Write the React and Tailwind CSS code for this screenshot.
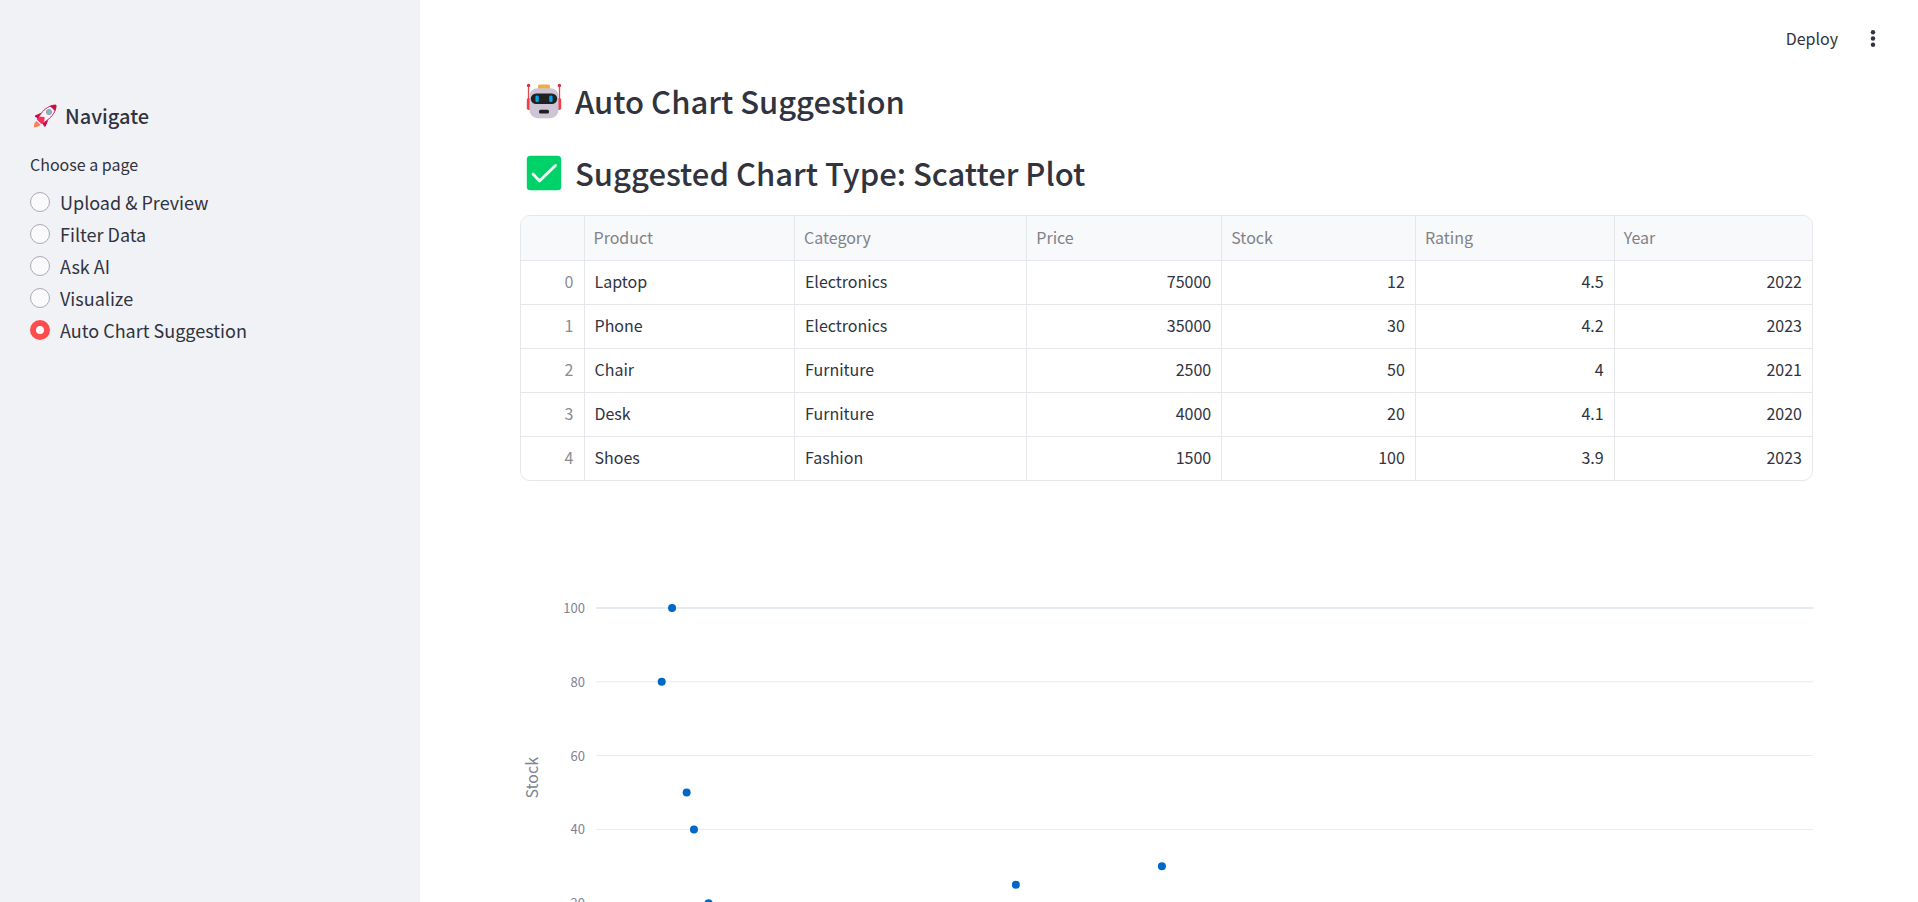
import { useState } from "react";

const PAGES = ["Upload & Preview", "Filter Data", "Ask AI", "Visualize", "Auto Chart Suggestion"];

const COLUMNS = [
  { name: "Product", width: "w-[16.3%]" },
  { name: "Category", width: "w-[18%]" },
  { name: "Price", width: "w-[15.1%]", numeric: true },
  { name: "Stock", width: "w-[15%]", numeric: true },
  { name: "Rating", width: "w-[15.4%]", numeric: true },
  { name: "Year", width: "", numeric: true },
];

const ROWS = [
  ["Laptop", "Electronics", "75000", "12", "4.5", "2022"],
  ["Phone", "Electronics", "35000", "30", "4.2", "2023"],
  ["Chair", "Furniture", "2500", "50", "4", "2021"],
  ["Desk", "Furniture", "4000", "20", "4.1", "2020"],
  ["Shoes", "Fashion", "1500", "100", "3.9", "2023"],
];

const TICKS = [100, 80, 60, 40, 20, 0];

// x is a percentage of the plot width, y is the stock value
const POINTS = [
  { x: 6.25, y: 100 },
  { x: 5.4, y: 80 },
  { x: 7.45, y: 50 },
  { x: 8.05, y: 40 },
  { x: 9.25, y: 20 },
  { x: 34.5, y: 25 },
  { x: 46.5, y: 30 },
];

const yFor = (value) => 28 + ((100 - value) * 369) / 100;

function Rocket() {
  return (
    <svg viewBox="0 0 24 24" className="size-6 shrink-0" aria-hidden="true">
      <path d="M1 23.2c-.3-2.4.4-4.8 2.4-6.2l4 3.6c-1.2 2-3.8 2.9-6.4 2.6z" fill="#ff8257" />
      <path d="M8.2 8.7 2.6 11.3c-.8.4-.9 1.2-.3 1.8l3 1.300zM15.400 15.800l-2.600 6.200c-.4.8-1.300.9-1.800.2l-1.700-3.200z" fill="#ca0b4a" />
      <path d="M23 1.100c.4 4.100-2.200 9.400-6.600 13.300-2.100 1.900-4.600 3.700-7 4.900l-4.600-4.500c1.100-2.500 2.800-5 4.700-7.100C13.400 3.400 18.900.7 23 1.100z" fill="#f4f4f4" stroke="#ca0b4a" strokeWidth="0.9" />
      <path d="M16.900 1.900C19 1.100 21.200.8 23 1.100c.3 1.900-.1 4-.9 6z" fill="#ca0b4a" />
      <circle cx="16" cy="8" r="2.6" fill="#83b9cf" stroke="#8d97a5" strokeWidth="0.9" />
      <path d="M3.800 15.500c2-2 4.200-2.700 7.500-2.600-.1 3.200-.8 5.400-2.800 7.200z" fill="#f92f60" />
      <path d="M7 12.700l4.400.2-.1 4-2.600 2.700-5-4.800z" fill="#f92f60" />
    </svg>
  );
}

function Robot() {
  return (
    <svg viewBox="0 0 36 36" className="size-9 shrink-0" aria-hidden="true">
      <path d="M2.500 3v16M33.500 3v16" stroke="#e8474c" strokeWidth="1.3" />
      <circle cx="2.6" cy="2.5" r="1.7" fill="#d9303f" />
      <circle cx="33.4" cy="2.5" r="1.7" fill="#d9303f" />
      <rect x="0.8" y="15" width="4" height="12" rx="1.8" fill="#ee4248" />
      <rect x="31.2" y="15" width="4" height="12" rx="1.8" fill="#ee4248" />
      <rect x="12" y="1.6" width="12" height="5" rx="1.5" fill="#f3ad3d" />
      <rect x="3.5" y="5.2" width="29" height="30" rx="8" fill="#cdc4d6" />
      <rect x="4.8" y="10.5" width="26.4" height="10.6" rx="5.3" fill="#212121" />
      <rect x="9.4" y="12.6" width="3.4" height="6.4" rx="1.5" fill="#00a6ed" />
      <rect x="23.2" y="12.6" width="3.4" height="6.4" rx="1.5" fill="#00a6ed" />
      <rect x="13" y="26.8" width="10" height="3.6" rx="1.5" fill="#212121" />
    </svg>
  );
}

function CheckBadge() {
  return (
    <svg viewBox="0 0 36 36" className="size-9 shrink-0" aria-hidden="true">
      <rect x="0.8" y="0.8" width="34.4" height="34.4" rx="3.5" fill="#00d26a" />
      <path d="M7 19l6.500 7L29.500 10.500" fill="none" stroke="#f4f4f4" strokeWidth="2.9" strokeLinecap="round" strokeLinejoin="round" />
    </svg>
  );
}

function Sidebar() {
  const [page, setPage] = useState("Auto Chart Suggestion");
  return (
    <aside className="w-[420px] shrink-0 bg-[#f0f2f6] px-[30px] pt-[98px]">
      <h2 className="flex items-center gap-2 pl-[3px] text-[20px] leading-9 font-medium">
        <Rocket />
        Navigate
      </h2>
      <fieldset className="mt-[16px]">
        <legend className="mb-[8px] text-base leading-7">Choose a page</legend>
        {PAGES.map((name) => (
          <label key={name} className="flex h-8 items-center gap-[10px] text-lg leading-8">
            <input
              type="radio"
              name="page"
              checked={page === name}
              onChange={() => setPage(name)}
              className="size-5 shrink-0 appearance-none rounded-full border border-[#a9abb3] bg-[#fafafc] checked:border-[6px] checked:border-[#ff4b4b] checked:bg-white"
            />
            {name}
          </label>
        ))}
      </fieldset>
    </aside>
  );
}

function DataTable() {
  return (
    <div className="mt-[5px] overflow-hidden rounded-[10px] border border-[#e6e7ea]">
      <table className="w-full table-fixed border-collapse text-base leading-6">
        <thead>
          <tr className="h-[44px] border-b border-[#e6e7ea] bg-[#f8f9fb] text-left text-[#808289]">
            <th className="w-[63px] border-r border-[#e6e7ea]" aria-label="Index" />
            {COLUMNS.map((c) => (
              <th key={c.name} className={`border-r border-[#e6e7ea] px-[9px] pb-[2px] font-normal last:border-r-0 ${c.width}`}>
                {c.name}
              </th>
            ))}
          </tr>
        </thead>
        <tbody>
          {ROWS.map((row, i) => (
            <tr key={row[0]} className="h-[44px] border-b border-[#e6e7ea] last:border-b-0">
              <td className="border-r border-[#e6e7ea] px-[10px] pb-[2px] text-right text-[#8a8c93]">{i}</td>
              {row.map((cell, j) => (
                <td
                  key={COLUMNS[j].name}
                  className={`border-r border-[#e6e7ea] px-[10px] pb-[2px] last:border-r-0 ${COLUMNS[j].numeric ? "text-right" : "text-left"}`}
                >
                  {cell}
                </td>
              ))}
            </tr>
          ))}
        </tbody>
      </table>
    </div>
  );
}

function ScatterChart() {
  return (
    <figure className="mt-[99px] flex text-[#808495]" aria-label="Stock by price">
      <div className="flex h-[396px] w-[22px] items-center justify-center">
        <span className="rotate-180 text-base leading-6 [writing-mode:vertical-rl]">Stock</span>
      </div>
      <svg className="h-[410px] w-[54px] shrink-0" aria-hidden="true">
        {TICKS.map((t) => (
          <text key={t} x="43" y={yFor(t) + 5} textAnchor="end" className="fill-[#808495] text-[13px]">
            {t}
          </text>
        ))}
      </svg>
      <svg className="h-[410px] min-w-0 flex-1 overflow-visible">
        {TICKS.map((t) => (
          <line key={t} x1="0" x2="100%" y1={yFor(t)} y2={yFor(t)} stroke="#e6eaf1" strokeWidth={t === 100 ? 2 : 1} />
        ))}
        {POINTS.map((p) => (
          <circle key={p.x} cx={`${p.x}%`} cy={yFor(p.y)} r="4" fill="#0068c9" />
        ))}
      </svg>
    </figure>
  );
}

export default function App() {
  return (
    <div className="flex h-screen overflow-hidden bg-white font-['Noto_Sans_CJK_JP','Noto_Sans',sans-serif] text-[#31333f]">
      <Sidebar />
      <div className="flex min-w-0 flex-1 flex-col">
        <header className="flex h-[65px] shrink-0 items-center justify-end gap-[25px] pt-[10px] pr-[35px]">
          <button type="button" className="text-base leading-6">Deploy</button>
          <button type="button" aria-label="Menu" className="flex size-5 items-center justify-center">
            <svg viewBox="0 0 20 20" className="size-5" fill="#31333f" aria-hidden="true">
              <circle cx="10" cy="4.200" r="2.2" />
              <circle cx="10" cy="10.500" r="2.2" />
              <circle cx="10" cy="16.800" r="2.2" />
            </svg>
          </button>
        </header>
        <main className="min-h-0 flex-1 overflow-hidden pr-[105px] pl-[100px]">
          <h1 className="flex h-[72px] items-center gap-[13px] pl-[6px] text-[31px] leading-10 font-medium">
            <Robot />
            Auto Chart Suggestion
          </h1>
          <h2 className="mb-[6px] flex h-[72px] items-center gap-[13px] pl-[6px] text-[31px] leading-10 font-medium">
            <CheckBadge />
            Suggested Chart Type: Scatter Plot
          </h2>
          <DataTable />
          <ScatterChart />
        </main>
      </div>
    </div>
  );
}
